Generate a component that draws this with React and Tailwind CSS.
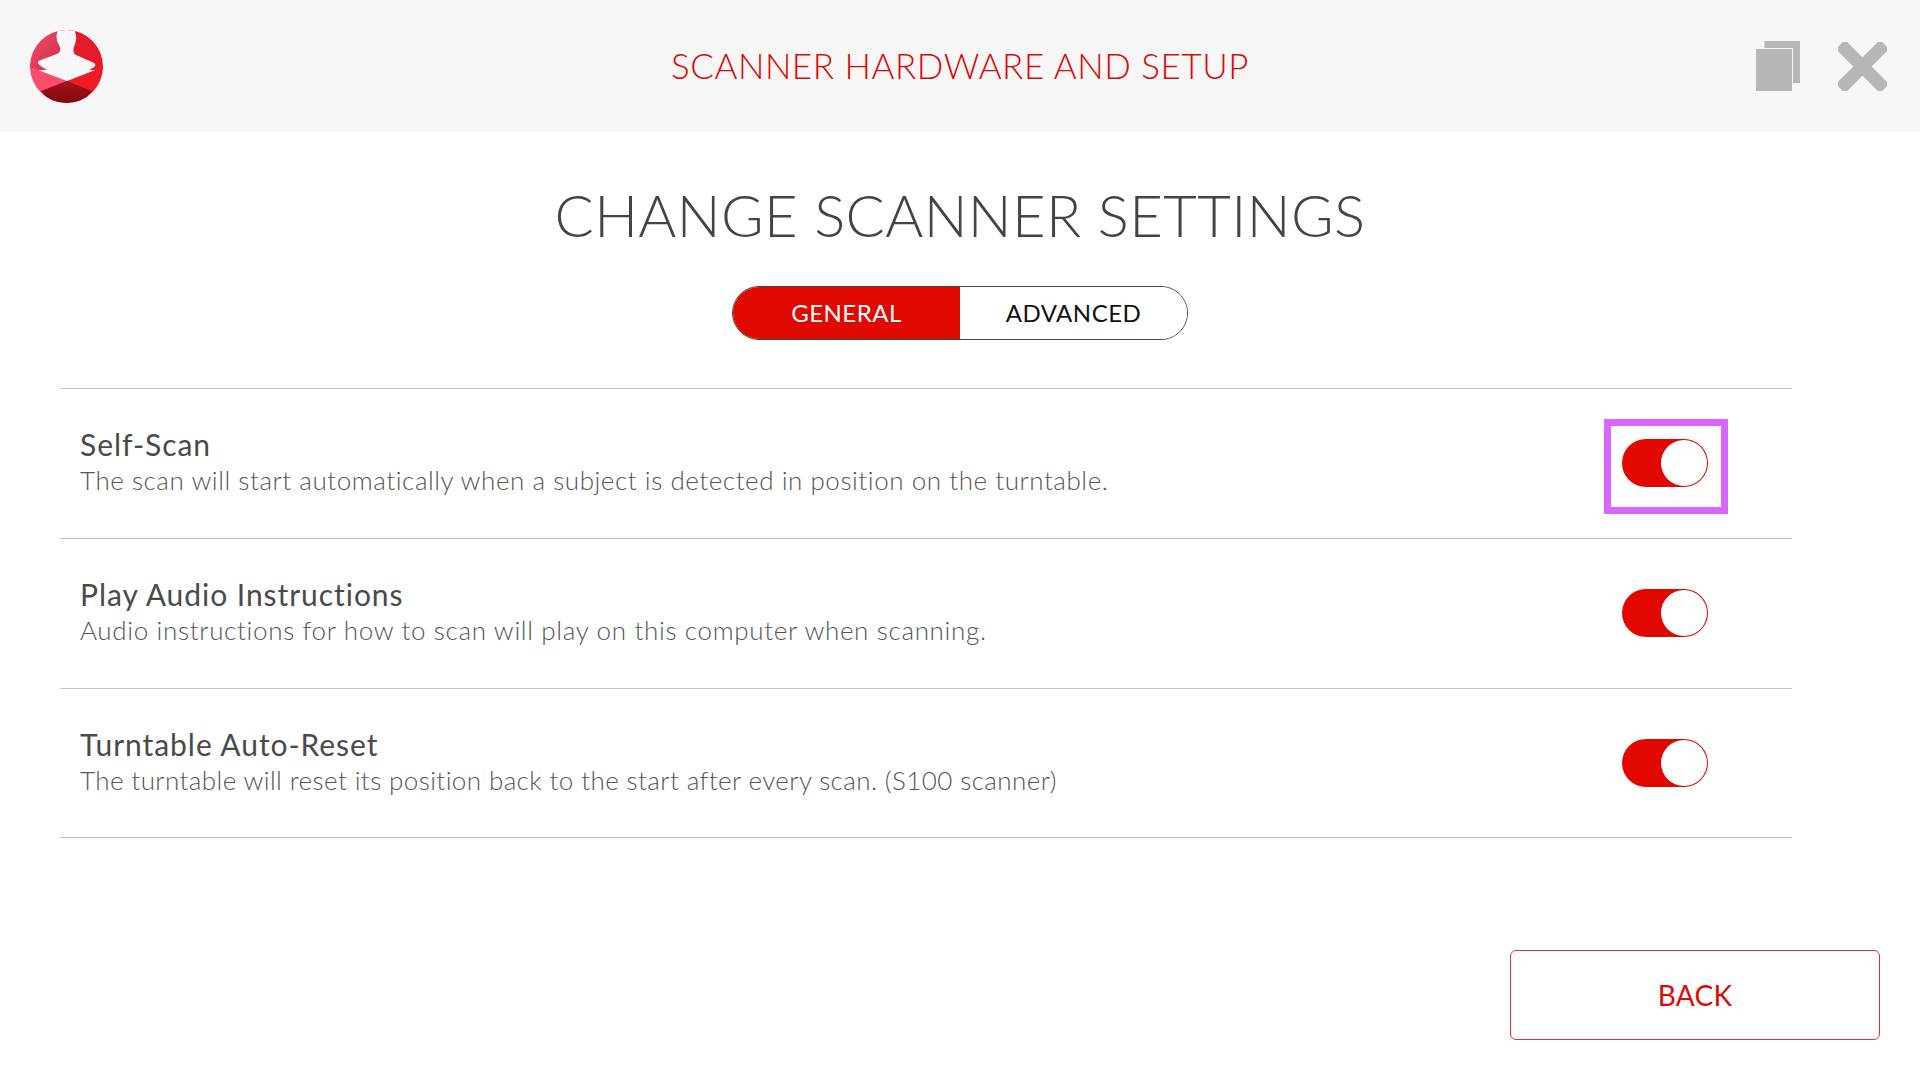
import { useState } from "react";

const rows = [
  {
    title: "Self-Scan",
    text: "The scan will start automatically when a subject is detected in position on the turntable.",
    spacing: "tracking-[0.55px]",
    marked: true,
  },
  {
    title: "Play Audio Instructions",
    text: "Audio instructions for how to scan will play on this computer when scanning.",
    spacing: "tracking-[0.66px]",
  },
  {
    title: "Turntable Auto-Reset",
    text: "The turntable will reset its position back to the start after every scan. (S100 scanner)",
    spacing: "tracking-[0.4px]",
  },
];

function Logo() {
  return (
    <svg width="73" height="73" viewBox="0 0 73 73">
      <defs>
        <clipPath id="disc">
          <circle cx="36.5" cy="36.5" r="36.5" />
        </clipPath>
        <linearGradient id="topLeft" x1="0" y1="0" x2="1" y2="1">
          <stop offset="0" stopColor="#ee4a66" />
          <stop offset="1" stopColor="#cf2f48" />
        </linearGradient>
        <linearGradient id="bottom" x1="0" y1="0" x2="0" y2="1">
          <stop offset="0" stopColor="#a5111c" />
          <stop offset="1" stopColor="#7f0a10" />
        </linearGradient>
      </defs>
      <g clipPath="url(#disc)">
        <rect x="0" y="0" width="37" height="40" fill="url(#topLeft)" />
        <rect x="36" y="0" width="37" height="40" fill="#e31b2a" />
        <path d="M0 37 L37 51 L37 73 L0 73 Z" fill="#fb4c69" />
        <path d="M73 37 L37 51 L37 73 L73 73 Z" fill="#ee1b26" />
        <path d="M36.7 51 L11 61 L20 73 L53 73 L62 61 Z" fill="url(#bottom)" />
        <path
          d="M28.3 0 C26 4 26 9 28.5 14 C30.5 18 31.5 21 28 23.5 L9 30.8 C7.5 32 7.5 33.5 9.5 35 C16 40 28 46 36.7 51 C46 47 56 42 63.5 37.5 C66 36 66 34 63 32.5 L46 25 C42.5 23 43 19 45 14 C47 9 46.5 4 44 0 Z"
          fill="#f8f8f8"
        />
      </g>
    </svg>
  );
}

function CopyIcon() {
  return (
    <svg width="44" height="50" viewBox="0 0 44 50">
      <path d="M8.5 0 H44 V42 H37 V7 H8.5 Z" fill="#b7b7b7" />
      <rect x="0" y="8" width="36" height="42" fill="#b7b7b7" />
    </svg>
  );
}

function CloseIcon() {
  return (
    <svg width="49" height="49" viewBox="0 0 49 49">
      <path
        d="M7 7 L42 42 M42 7 L7 42"
        stroke="#b7b7b7"
        strokeWidth="13"
        strokeLinecap="square"
      />
    </svg>
  );
}

function Toggle({ marked }) {
  return (
    <div className="relative">
      <button className="flex h-12 w-[86px] justify-end rounded-full bg-[#e10800] p-[1px]">
        <span className="h-[46px] w-[46px] rounded-full bg-white" />
      </button>
      {marked && (
        <div className="absolute left-[-18px] top-[-20px] h-[95px] w-[124px] border-[7px] border-[#d966ff]" />
      )}
    </div>
  );
}

export default function App() {
  const [tab, setTab] = useState("general");

  return (
    <div className="h-[1080px] w-[1920px] overflow-hidden bg-white font-['Lato',sans-serif]">
      {/* header */}
      <header className="grid h-[132px] grid-cols-[1fr_auto_1fr] items-center bg-[#f7f7f7] px-[30px]">
        <Logo />
        <h2 className="pb-[1px] text-[35px] font-light tracking-[0.55px] text-[#e10800]">
          SCANNER HARDWARE AND SETUP
        </h2>
        <div className="flex items-center justify-end gap-[38px] pr-[3px]">
          <CopyIcon />
          <CloseIcon />
        </div>
      </header>

      <h1 className="mt-[45px] text-center text-[58px] font-light leading-[75px] tracking-[0.4px] text-[#444444]">
        CHANGE SCANNER SETTINGS
      </h1>

      {/* tabs */}
      <div className="mt-[34px] flex justify-center">
        <div className="flex h-[54px] w-[456px] overflow-hidden rounded-[27px] border border-[#444444]">
          <button
            onClick={() => setTab("general")}
            className={
              tab === "general"
                ? "flex-1 bg-[#e10800] text-[24px] tracking-[0.5px] text-white"
                : "flex-1 bg-white text-[24px] tracking-[0.5px] text-[#111111]"
            }
          >
            GENERAL
          </button>
          <button
            onClick={() => setTab("advanced")}
            className={
              tab === "advanced"
                ? "flex-1 bg-[#e10800] text-[24px] tracking-[0.5px] text-white"
                : "flex-1 bg-white text-[24px] tracking-[0.5px] text-[#111111]"
            }
          >
            ADVANCED
          </button>
        </div>
      </div>

      {/* settings list */}
      <div className="ml-[60px] mt-[48px] w-[1732px] border-b border-[#c4c4c4]">
        {rows.map((row) => (
          <div
            key={row.title}
            className="group flex h-[150px] items-center justify-between border-t border-[#c4c4c4] pb-[1px] pl-[20px] pr-[84px] last:h-[149px]"
          >
            <div className="pb-[3px] group-last:pb-[1px]">
              <div className="text-[30px] leading-[36px] tracking-[0.95px] text-[#4a4a4a]">{row.title}</div>
              <div className={`text-[26px] font-light leading-[36px] text-[#555555] ${row.spacing}`}>{row.text}</div>
            </div>
            <Toggle marked={row.marked} />
          </div>
        ))}
      </div>

      <div className="mt-[112px] flex justify-end pr-[40px]">
        <button className="h-[90px] w-[370px] rounded-[6px] border border-[#e83030] text-[28px] tracking-[0.3px] text-[#e10800]">
          BACK
        </button>
      </div>
    </div>
  );
}
